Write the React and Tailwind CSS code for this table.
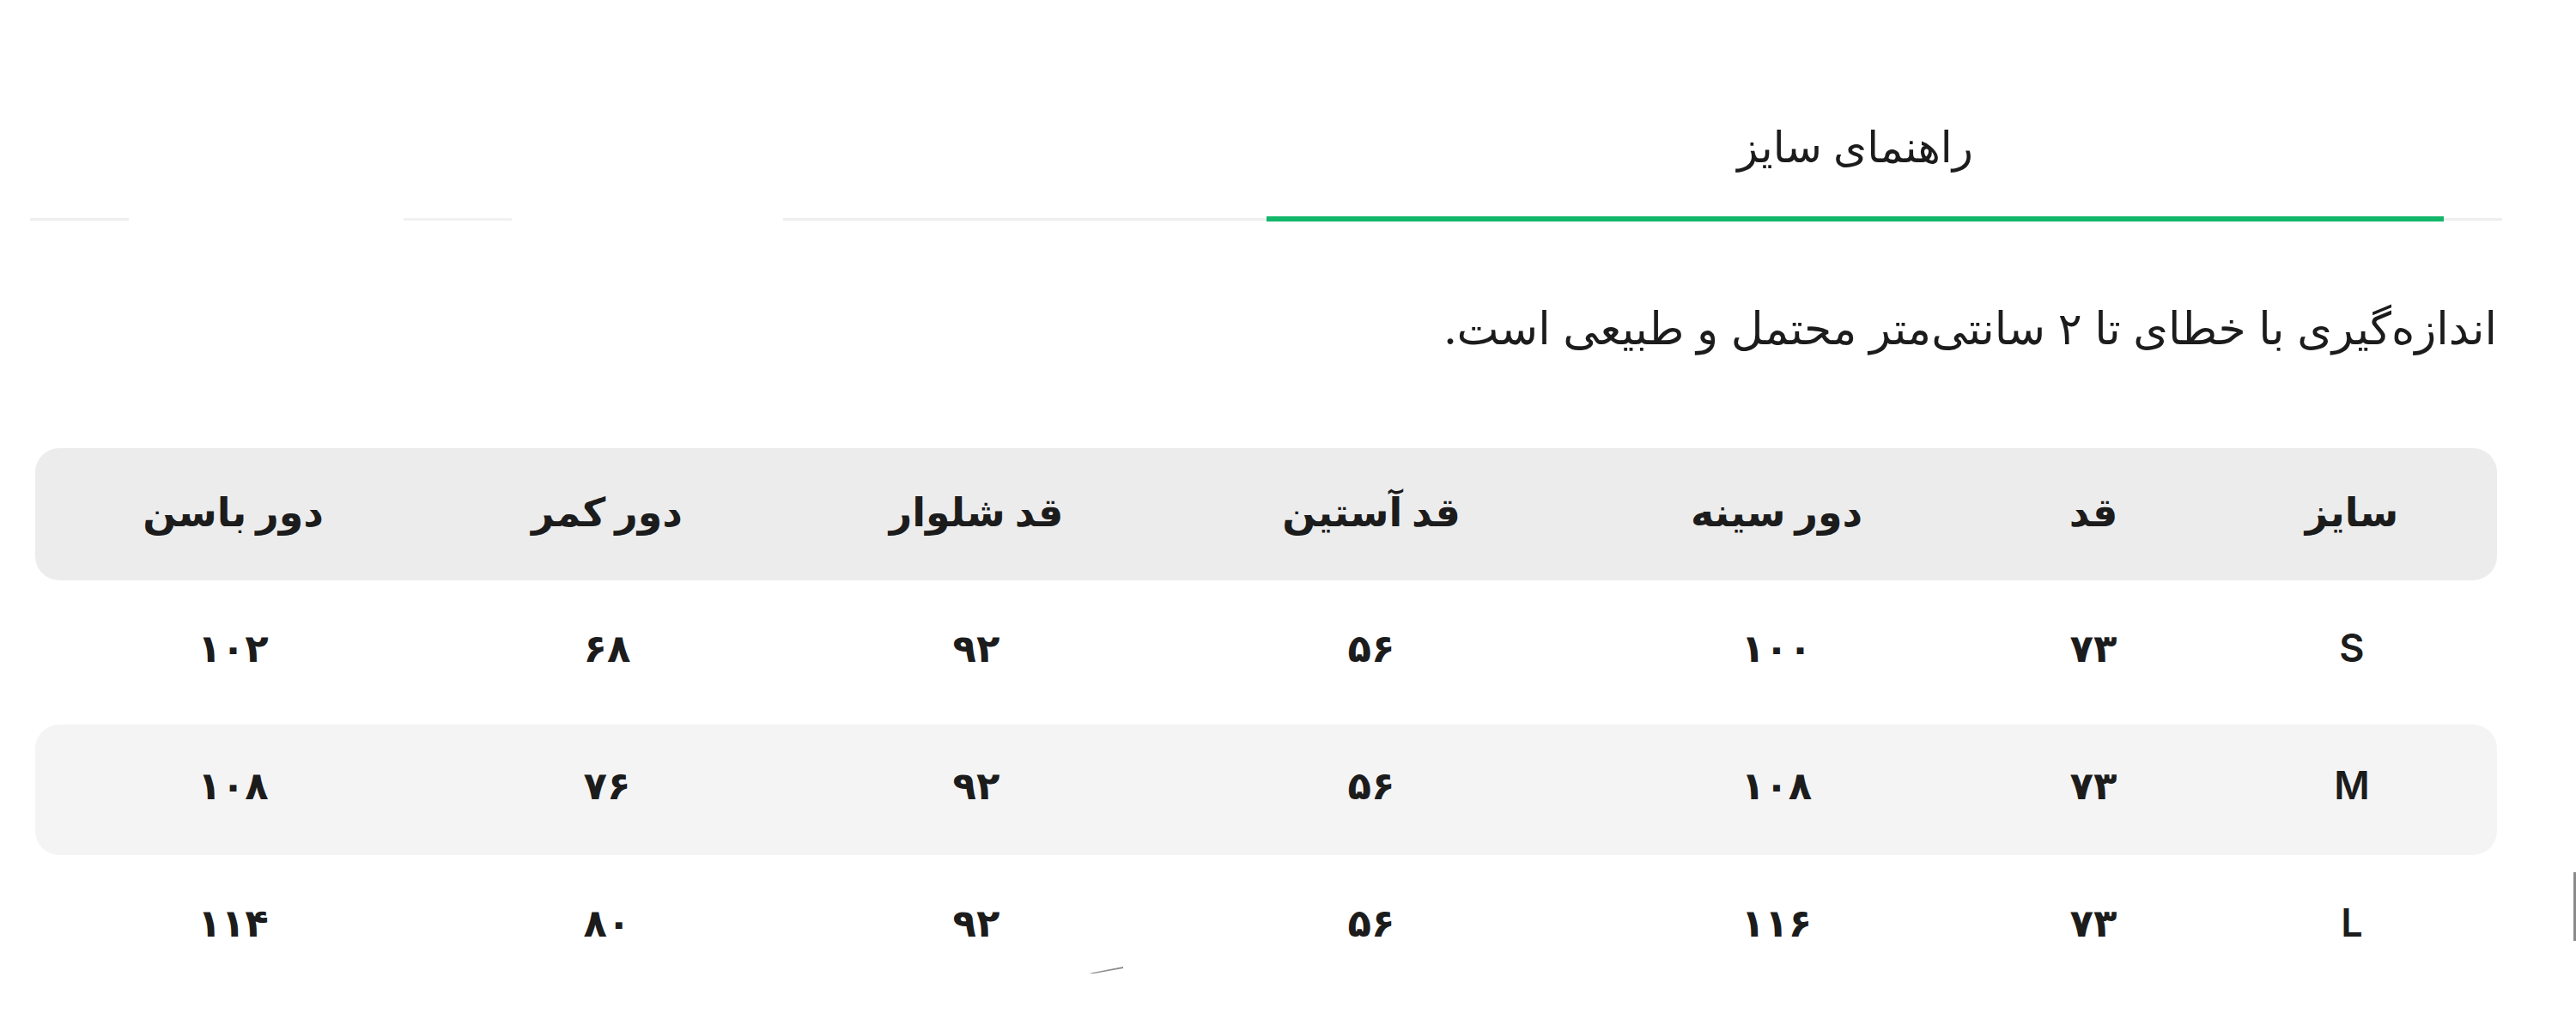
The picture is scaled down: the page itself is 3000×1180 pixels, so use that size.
const columns = ["سایز", "قد", "دور سینه", "قد آستین", "قد شلوار", "دور کمر", "دور باسن"];

const rows = [
  ["S", "۷۳", "۱۰۰", "۵۶", "۹۲", "۶۸", "۱۰۲"],
  ["M", "۷۳", "۱۰۸", "۵۶", "۹۲", "۷۶", "۱۰۸"],
  ["L", "۷۳", "۱۱۶", "۵۶", "۹۲", "۸۰", "۱۱۴"],
];

// rtl grid, first column is the right-most one
const grid = "grid grid-cols-[338px_264px_474px_470px_450px_410px_461px]";

const App = () => {
  return (
    <div className="relative w-[3000px] h-[1180px] bg-white text-[#1c1c1c] font-['Inter','DejaVu_Sans',sans-serif] overflow-hidden">
      {/* tabs */}
      <div dir="rtl" className="flex pr-[154px]">
        <button className="w-[1371px] h-[252px] pt-[90px] flex items-center justify-center text-[50px] font-medium">
          راهنمای سایز
        </button>
      </div>

      {/* tab underline */}
      <div className="flex items-center h-[6px] pl-[35px]">
        <div className="w-[115px] h-[3px] bg-[#eeeeee]"></div>
        <div className="w-[320px] h-[3px] bg-white"></div>
        <div className="w-[126px] h-[3px] bg-[#f1f1f1]"></div>
        <div className="w-[316px] h-[3px] bg-white"></div>
        <div className="w-[563px] h-[3px] bg-[#eeeeee]"></div>
        <div className="w-[1371px] h-[6px] bg-[#12b76a]"></div>
        <div className="w-[68px] h-[3px] bg-[#eeeeee]"></div>
      </div>

      <div dir="rtl" className="pr-[92px] pl-[45px]">
        <p className="mt-[93px] h-[64px] leading-[64px] text-[52px] text-right">
          اندازه‌گیری با خطای تا ۲ سانتی‌متر محتمل و طبیعی است.
        </p>

        <div className="mt-[107px] w-[2867px] flex flex-col gap-[8px]">
          <div className={`${grid} h-[154px] rounded-[28px] bg-[#ececec]`}>
            {columns.map((c) => (
              <div key={c} className="flex items-center justify-center pb-[6px] text-[46px] font-bold">
                {c}
              </div>
            ))}
          </div>

          {rows.map((r, i) => (
            <div key={r[0]} className={`${grid} h-[152px] rounded-[28px] ${i === 1 ? "bg-[#f4f4f4]" : "bg-white"}`}>
              {r.map((v, j) => (
                <div key={j} className="flex items-center justify-center pb-[10px] text-[45px] font-semibold">
                  {v}
                </div>
              ))}
            </div>
          ))}
        </div>
      </div>

      {/* stray bits from the capture */}
      <div className="absolute right-0 top-[1016px] w-[3px] h-[80px] bg-[#8a8a8a]"></div>
      <svg className="absolute left-[1268px] top-[1126px]" width="40" height="8" viewBox="0 0 40 8">
        <polygon points="0,8 40,0 40,2 6,8" fill="#8c8c8c" />
      </svg>
    </div>
  );
};

export default App;
